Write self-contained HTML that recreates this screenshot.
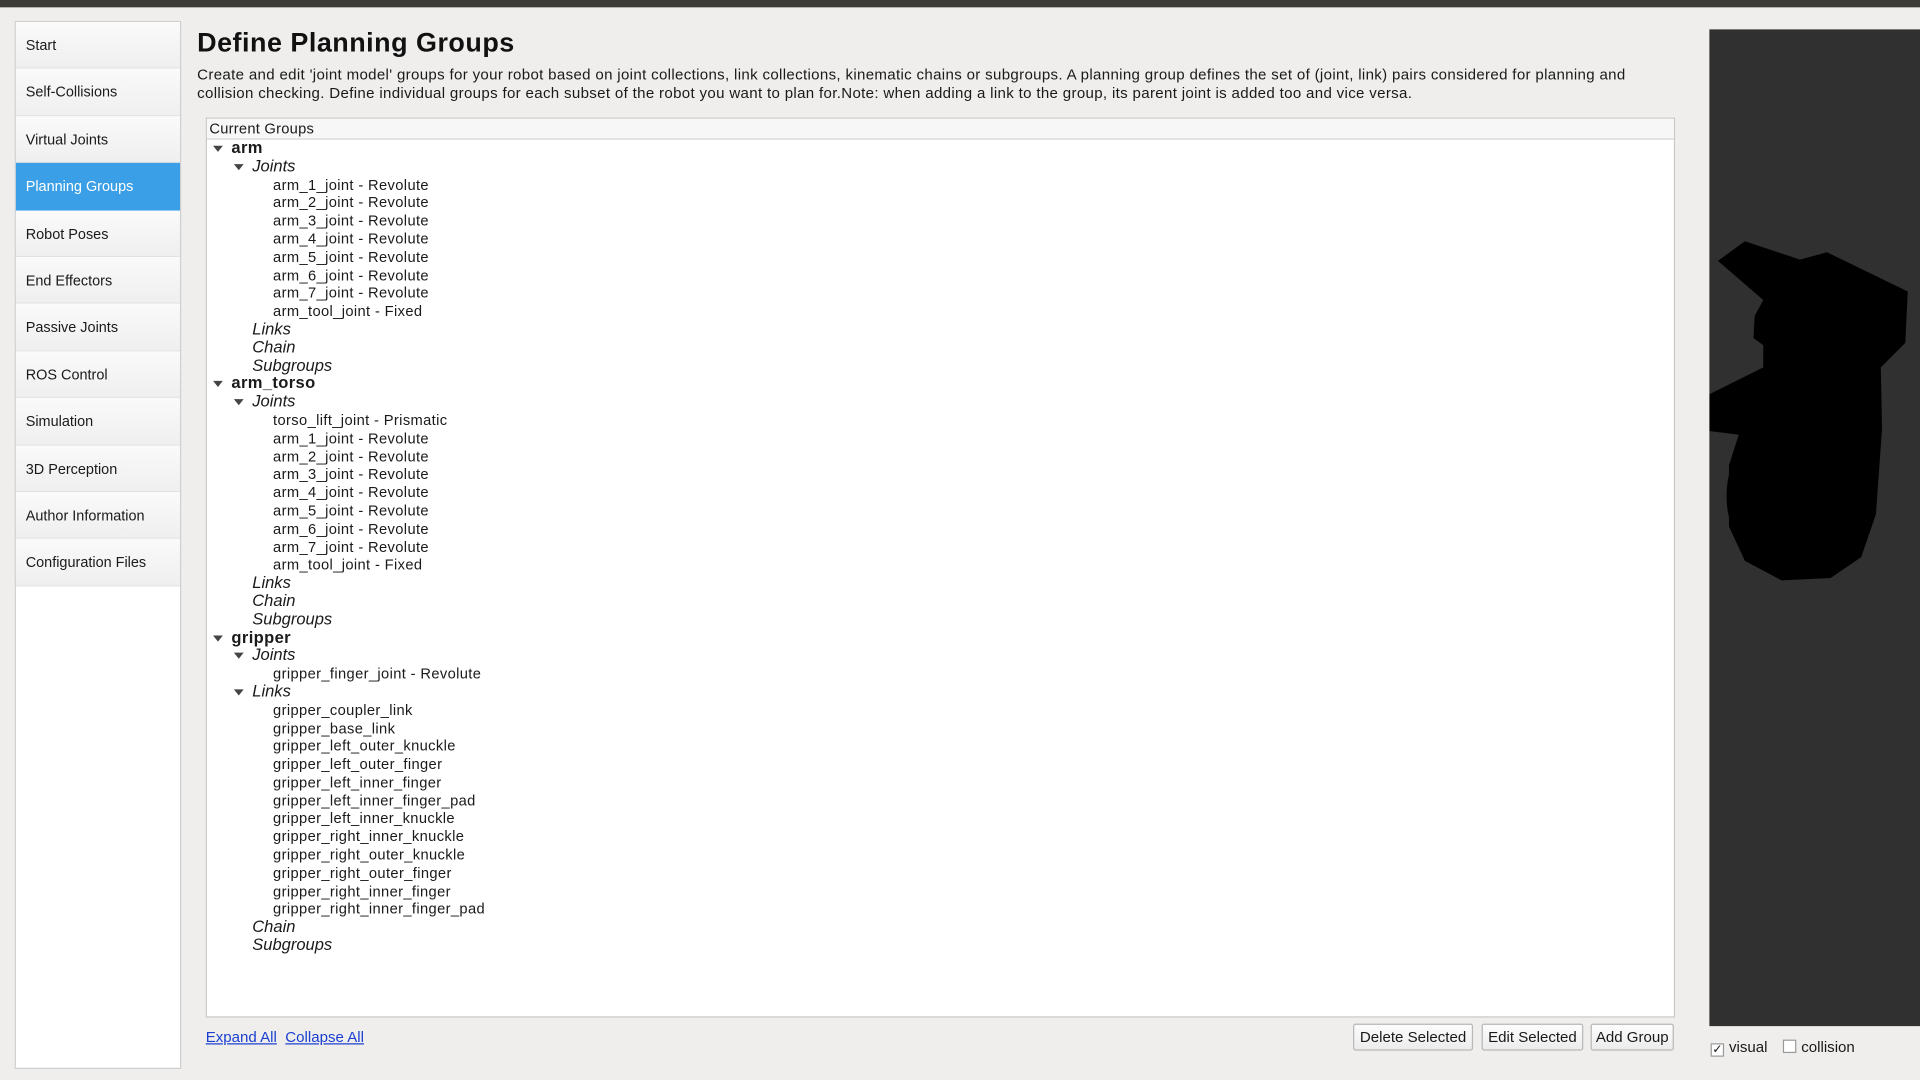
<!DOCTYPE html>
<html><head><meta charset="utf-8"><style>
*{margin:0;padding:0;box-sizing:border-box}
html,body{width:1920px;height:1080px;overflow:hidden;background:#efeeed}
#w{width:1568px;height:882px;transform:scale(1.22449);transform-origin:0 0;position:relative;font-family:"Liberation Sans","DejaVu Sans",sans-serif;color:#1a1a1a;background:#efeeed}
.top{position:absolute;left:0;top:0;width:1568px;height:6px;background:#3c3b37}
.side{position:absolute;left:12px;top:17px;width:136px;height:856px;background:#fff;border:1px solid #cfcfcf}
.it{height:38.4px;line-height:38px;padding-left:8px;font-size:11.8px;background:linear-gradient(#fafafa,#efefef);border-bottom:1px solid #e2e2e2}
.it.sel{background:#3a9fe6;color:#fff;border-color:#3a9fe6}
h1{position:absolute;left:161px;top:22px;font-size:22px;font-weight:bold;color:#111;letter-spacing:0.4px}
.desc{position:absolute;left:161px;top:54px;width:1200px;font-size:12.3px;line-height:14.6px;letter-spacing:0.27px}
.tree{position:absolute;left:168px;top:96px;width:1200px;height:735px;background:#fff;border:1px solid #c8c8c8}
.hdr{height:17px;line-height:17px;font-size:12px;padding-left:2px;border-bottom:1px solid #d6d6d6;background:#f7f7f7;letter-spacing:0.2px}
.r{height:14.8px;line-height:14.8px;font-size:12px;white-space:nowrap;position:relative;letter-spacing:0.3px}
.g{padding-left:20px;font-weight:bold;font-size:13.5px}
.s{padding-left:37px;font-style:italic;font-size:13.5px;letter-spacing:0}
.l{padding-left:54px}
.a:before{content:"";position:absolute;top:5px;border-left:4px solid transparent;border-right:4px solid transparent;border-top:5px solid #444}
.g.a:before{left:5px}.s.a:before{left:22px}
.links{position:absolute;left:168px;top:840px;font-size:12.3px;color:#1a3fd0;text-decoration:underline}
.btn{position:absolute;top:836px;height:22px;line-height:20px;font-size:12.3px;border:1px solid #b8b8b8;border-radius:2px;background:linear-gradient(#fdfdfd,#ececec);text-align:center}
.rv{position:absolute;left:1396px;top:24px;width:172px;height:814px;background:#303030;overflow:hidden}
.cb{position:absolute;top:848px;font-size:12.3px}
.box{display:inline-block;width:11px;height:11px;border:1px solid #999;background:#fff;vertical-align:-1px;margin-right:4px;font-size:10px;line-height:9px;text-align:center}
</style></head><body><div id="w">
<div class="top"></div>
<div class="side">
<div class="it">Start</div><div class="it">Self-Collisions</div><div class="it">Virtual Joints</div><div class="it sel">Planning Groups</div><div class="it">Robot Poses</div><div class="it">End Effectors</div><div class="it">Passive Joints</div><div class="it">ROS Control</div><div class="it">Simulation</div><div class="it">3D Perception</div><div class="it">Author Information</div><div class="it">Configuration Files</div>
</div>
<h1>Define Planning Groups</h1>
<div class="desc">Create and edit 'joint model' groups for your robot based on joint collections, link collections, kinematic chains or subgroups. A planning group defines the set of (joint, link) pairs considered for planning and collision checking. Define individual groups for each subset of the robot you want to plan for.Note: when adding a link to the group, its parent joint is added too and vice versa.</div>
<div class="tree"><div class="hdr">Current Groups</div>
<div class="r g a">arm</div><div class="r s a">Joints</div>
<div class="r l">arm_1_joint - Revolute</div><div class="r l">arm_2_joint - Revolute</div><div class="r l">arm_3_joint - Revolute</div><div class="r l">arm_4_joint - Revolute</div><div class="r l">arm_5_joint - Revolute</div><div class="r l">arm_6_joint - Revolute</div><div class="r l">arm_7_joint - Revolute</div><div class="r l">arm_tool_joint - Fixed</div>
<div class="r s">Links</div><div class="r s">Chain</div><div class="r s">Subgroups</div>
<div class="r g a">arm_torso</div><div class="r s a">Joints</div>
<div class="r l">torso_lift_joint - Prismatic</div><div class="r l">arm_1_joint - Revolute</div><div class="r l">arm_2_joint - Revolute</div><div class="r l">arm_3_joint - Revolute</div><div class="r l">arm_4_joint - Revolute</div><div class="r l">arm_5_joint - Revolute</div><div class="r l">arm_6_joint - Revolute</div><div class="r l">arm_7_joint - Revolute</div><div class="r l">arm_tool_joint - Fixed</div>
<div class="r s">Links</div><div class="r s">Chain</div><div class="r s">Subgroups</div>
<div class="r g a">gripper</div><div class="r s a">Joints</div>
<div class="r l">gripper_finger_joint - Revolute</div>
<div class="r s a">Links</div>
<div class="r l">gripper_coupler_link</div><div class="r l">gripper_base_link</div><div class="r l">gripper_left_outer_knuckle</div><div class="r l">gripper_left_outer_finger</div><div class="r l">gripper_left_inner_finger</div><div class="r l">gripper_left_inner_finger_pad</div><div class="r l">gripper_left_inner_knuckle</div><div class="r l">gripper_right_inner_knuckle</div><div class="r l">gripper_right_outer_knuckle</div><div class="r l">gripper_right_outer_finger</div><div class="r l">gripper_right_inner_finger</div><div class="r l">gripper_right_inner_finger_pad</div>
<div class="r s">Chain</div><div class="r s">Subgroups</div>
</div>
<div class="links">Expand All</div><div class="links" style="left:233px">Collapse All</div>
<div class="btn" style="left:1105px;width:98px">Delete Selected</div>
<div class="btn" style="left:1210px;width:83px">Edit Selected</div>
<div class="btn" style="left:1299px;width:68px">Add Group</div>
<div class="rv"><svg width="172" height="814" viewBox="1396 24 172 814">
<path fill="#000" d="M1403 213 L1425 197 L1470 212 L1492 206 L1558 238 L1556 280 L1536 300 L1537 350 L1532 420 L1520 455 L1495 472 L1455 474 L1425 458 L1412 430 L1412 380 L1420 355 L1396 352 L1396 322 L1440 300 L1440 282 L1432 276 L1433 258 L1440 245 Z"/>
<ellipse cx="1468" cy="405" rx="58" ry="68" fill="#000"/>
</svg></div>
<div class="cb" style="left:1397px"><span class="box">✓</span>visual</div>
<div class="cb" style="left:1456px"><span class="box"></span>collision</div>
</div></body></html>
